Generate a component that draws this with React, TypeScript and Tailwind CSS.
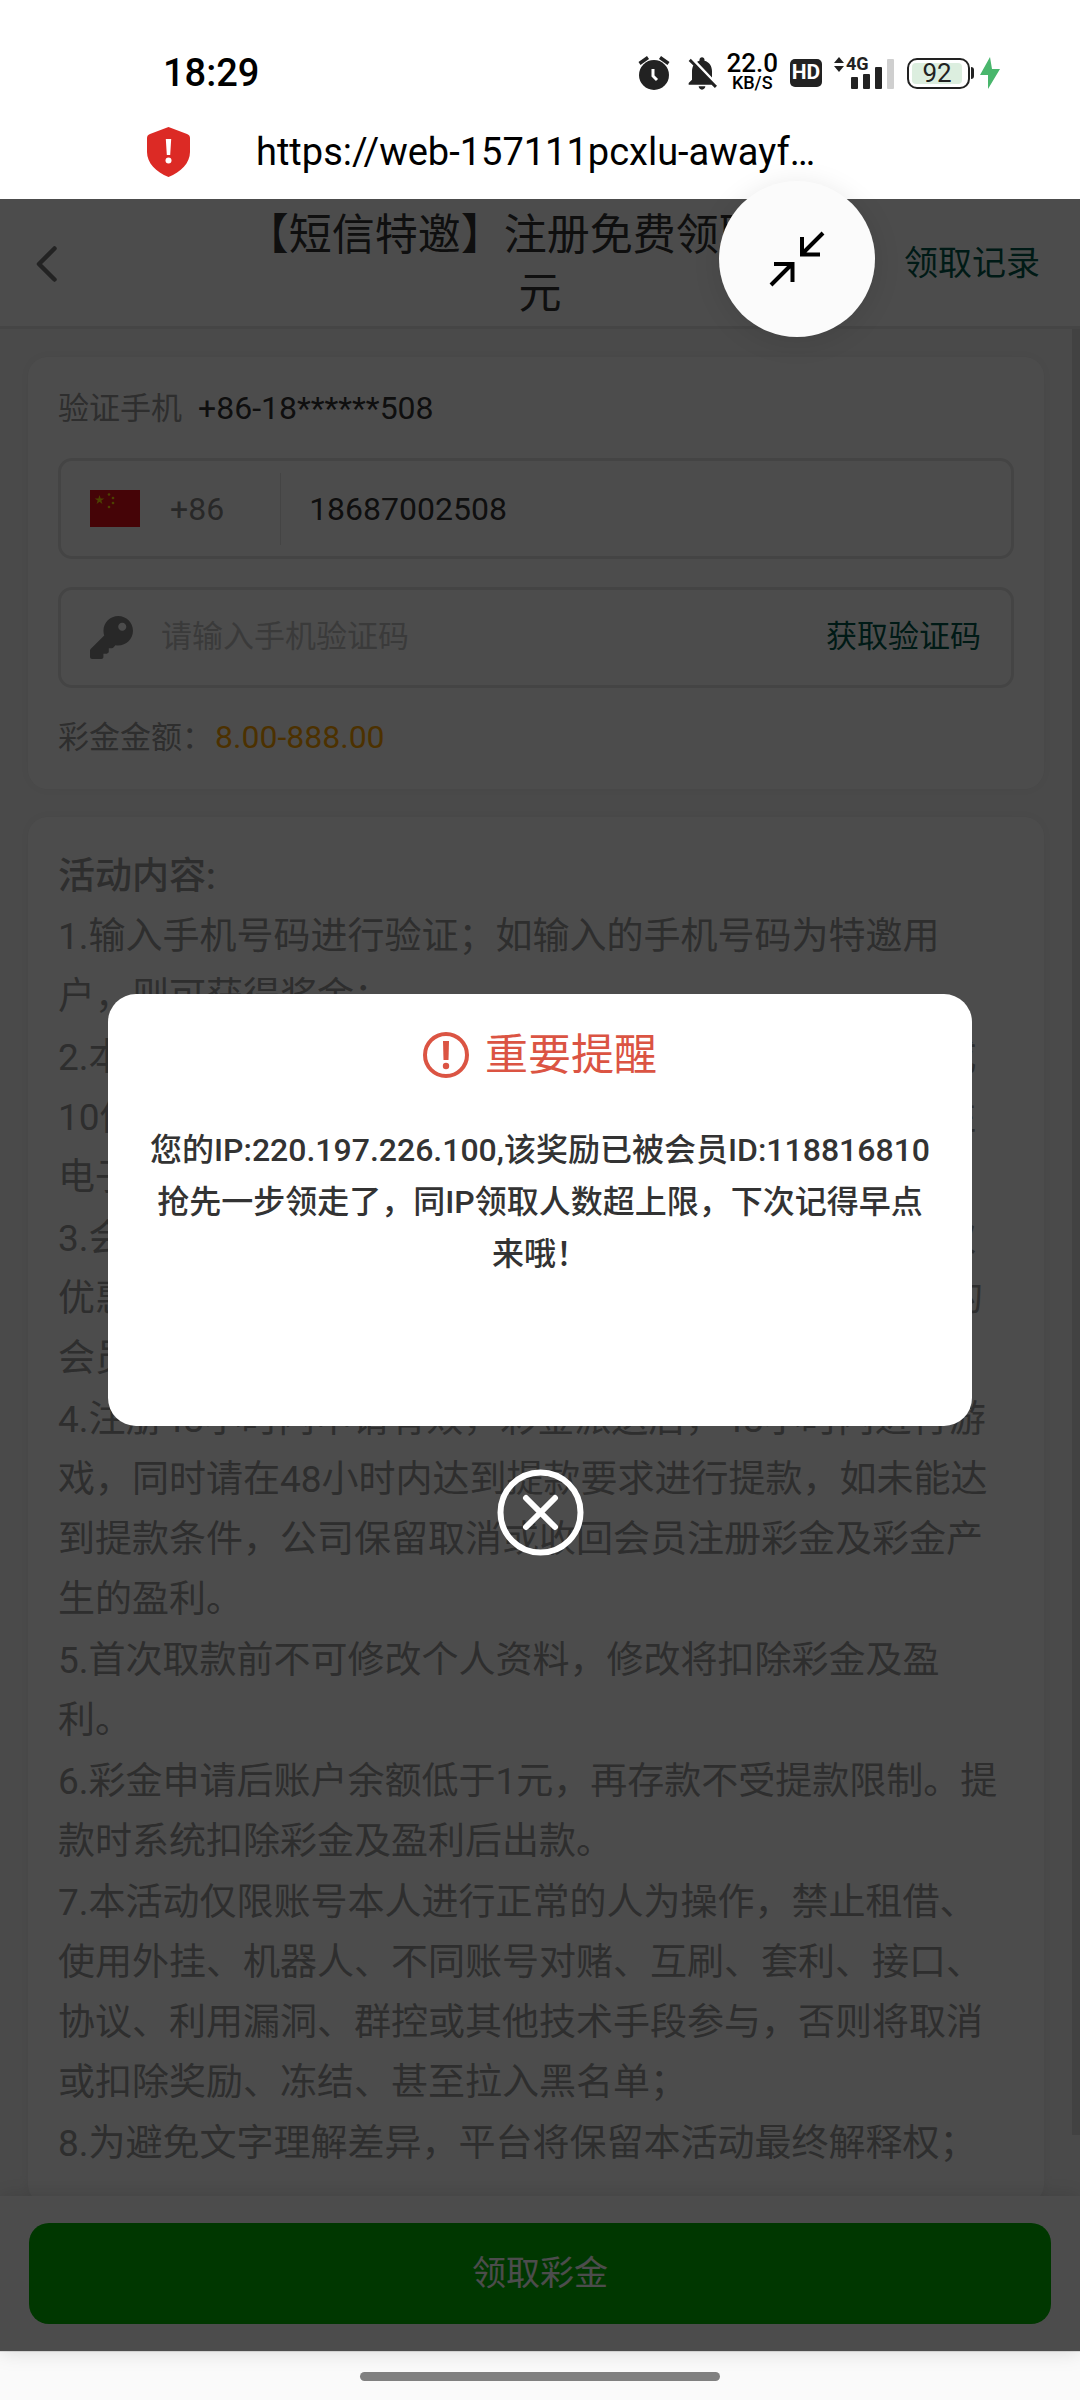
import { useState } from "react";
import { FaKey } from "react-icons/fa";
import { MdNotificationsOff } from "react-icons/md";

const rules = [
  "1.输入手机号码进行验证；如输入的手机号码为特邀用户，则可获得奖金；",
  "2.本活动赠送的彩金仅限老虎机及捕鱼游戏，申请需完成10倍流水方可提款，单次最高可提款100元，且仅限下注电子游戏；",
  "3.会员每个手机号码、姓名、银行卡、设备仅可参与一次优惠，如发现账号重复申请，平台将有权取消违规领取的会员彩金及盈利；",
  "4.注册48小时内申请有效，彩金派送后，48小时内进行游戏，同时请在48小时内达到提款要求进行提款，如未能达到提款条件，公司保留取消或收回会员注册彩金及彩金产生的盈利。",
  "5.首次取款前不可修改个人资料，修改将扣除彩金及盈利。",
  "6.彩金申请后账户余额低于1元，再存款不受提款限制。提款时系统扣除彩金及盈利后出款。",
  "7.本活动仅限账号本人进行正常的人为操作，禁止租借、使用外挂、机器人、不同账号对赌、互刷、套利、接口、协议、利用漏洞、群控或其他技术手段参与，否则将取消或扣除奖励、冻结、甚至拉入黑名单；",
  "8.为避免文字理解差异，平台将保留本活动最终解释权；",
];

const StatusBar = () => (
  <div className="flex h-16 items-center justify-between pl-[163px] pr-20 text-[#222]">
    <span className="text-[38px] font-medium text-black">18:29</span>
    <div className="flex items-center gap-3">
      <svg width="32" height="36" viewBox="0 0 32 36">
        <circle cx="16" cy="20" r="15" fill="#222" />
        <path d="M1.500 8.500l8.500-6M30.500 8.500l-8.500-6" stroke="#222" strokeWidth="3.500" />
        <path d="M15 14v7l4 4" fill="none" stroke="#fff" strokeWidth="3" />
      </svg>
      <MdNotificationsOff size={40} className="-mr-2" />
      <div className="flex flex-col items-center font-medium text-black">
        <span className="text-[26px] leading-5">22.0</span>
        <span className="text-lg leading-5">KB/S</span>
      </div>
      <span className="flex h-7 w-8 items-center justify-center rounded-[5px] bg-[#222] text-[21px] font-bold text-white">HD</span>
      {/* Signal */}
      <div className="relative">
        <svg width="60" height="34" viewBox="0 0 60 34">
          <path d="M5 1l5 6H0zM5 16l5-6H0z" fill="#222" />
          <rect x="17" y="21" width="7" height="12" rx="1" fill="#222" />
          <rect x="29" y="18" width="7" height="15" rx="1" fill="#222" />
          <rect x="41" y="11" width="7" height="22" rx="1" fill="#222" />
          <rect x="53" y="3" width="7" height="30" rx="1" fill="#cfcfcf" />
        </svg>
        <span className="absolute left-3 top-0 text-lg leading-4 font-bold">4G</span>
      </div>
      {/* Battery */}
      <div className="ml-px flex items-center">
        <div className="h-[31px] w-[63px] rounded-[10px] border-2 border-[#222] p-[3px]">
          <div className="flex h-full w-[50px] items-center justify-center rounded-[4px] bg-[#dceedf] text-[26px]">92</div>
        </div>
        <div className="ml-px h-3 w-[3px] rounded-r bg-[#222]" />
        <svg width="20" height="32" viewBox="0 0 20 32" className="ml-[6px]">
          <path d="M10 0L0 18h8v14L20 12h-8z" fill="#49b66c" />
        </svg>
      </div>
    </div>
  </div>
);

const Flag = () => (
  <svg width="50" height="37" viewBox="0 0 50 37" className="shrink-0">
    <rect width="50" height="37" fill="#e6101a" />
    <path d="M9.500 5l1.100 3.400h3.600l-2.900 2.100 1.100 3.400-2.900-2.100-2.900 2.100 1.100-3.400-2.900-2.100h3.600z" fill="#ffde00" />
    <circle cx="19" cy="4.500" r="1.300" fill="#ffde00" />
    <circle cx="23" cy="8" r="1.300" fill="#ffde00" />
    <circle cx="23" cy="13" r="1.300" fill="#ffde00" />
    <circle cx="19" cy="17" r="1.300" fill="#ffde00" />
  </svg>
);

const App = () => {
  const [phone, setPhone] = useState("18687002508");
  const [code, setCode] = useState("");
  const [isOpen, setIsOpen] = useState(true);

  return (
    <div className="flex h-screen flex-col overflow-hidden bg-white font-[Roboto,'Noto_Sans_CJK_SC',sans-serif]">
      <div className="shrink-0 pt-[41px]">
        <StatusBar />
        {/* Address bar */}
        <div className="flex h-[94px] items-center pl-[147px]">
          <svg width="43" height="50" viewBox="0 0 43 50">
            <path d="M21.500 0L40 7q3 1 3 4v14c0 11-9 20-21.500 25C9 45 0 36 0 25V11q0-3 3-4z" fill="#dc2a25" />
            <path d="M18.800 12h5.400l-1 16h-3.400z" fill="#fff" />
            <circle cx="21.500" cy="33.500" r="3" fill="#fff" />
          </svg>
          <span className="ml-[66px] text-[38px] text-black">https://web-157111pcxlu-awayf…</span>
        </div>
      </div>

      <div className="relative flex min-h-0 flex-1 flex-col bg-[#f8f8f8]">
        {/* Header */}
        <header className="flex h-[130px] shrink-0 items-center justify-between border-b-[3px] border-[#e8e8e8] bg-white pt-0.5 pl-9 pr-10">
          <button className="w-[140px]" aria-label="返回">
            <svg width="21" height="36" viewBox="0 0 21 36">
              <path d="M18.500 2.500L3 18l15.500 15.500" fill="none" stroke="#777" strokeWidth="4.500" strokeLinecap="round" strokeLinejoin="round" />
            </svg>
          </button>
          <h1 className="w-[620px] text-center text-[43px] leading-[58px] text-[#333]">【短信特邀】注册免费领取888元</h1>
          <a href="#records" className="text-[34px] text-[#00594a]">领取记录</a>
        </header>

        <div className="flex min-h-0 flex-1">
          <main className="min-w-0 flex-1 overflow-hidden p-7 text-[31px]">
            <section className="flex flex-col gap-7 rounded-[20px] bg-white p-[30px] shadow-[0_0_12px_rgba(0,0,0,0.06)]">
              <div className="flex gap-4 leading-[43px]">
                <span className="text-[#999]">验证手机</span>
                <span className="text-[32px] text-[#333]">+86-18******508</span>
              </div>
              <div className="flex h-[101px] items-center rounded-[14px] border-[3px] border-[#e4e4e4] pl-[29px] text-[32px]">
                <Flag />
                <button className="ml-[30px] text-[#888]">+86</button>
                <div className="ml-14 h-[72px] w-px bg-[#e4e4e4]" />
                <input
                  aria-label="手机号码"
                  type="tel"
                  value={phone}
                  onChange={(e) => setPhone(e.target.value)}
                  className="ml-[28px] min-w-0 flex-1 text-[#333] outline-none"
                />
              </div>
              <div className="flex h-[101px] items-center rounded-[14px] border-[3px] border-[#e4e4e4] pl-[29px] pr-[30px]">
                <FaKey size={43} className="shrink-0 text-[#888]" />
                <input
                  aria-label="手机验证码"
                  value={code}
                  onChange={(e) => setCode(e.target.value)}
                  placeholder="请输入手机验证码"
                  className="ml-[28px] min-w-0 flex-1 outline-none placeholder:text-[#c4c4c4]"
                />
                <button className="text-[#00594a]">获取验证码</button>
              </div>
              <div className="flex gap-0.5 leading-[43px]">
                <span className="text-[#999]">彩金金额：</span>
                <span className="text-[32px] text-[#ffa500]">8.00-888.00</span>
              </div>
            </section>

            <section className="mt-7 rounded-[20px] bg-white py-[30px] pl-[30px] pr-8 text-[37px] leading-[60px] text-[#999] shadow-[0_0_12px_rgba(0,0,0,0.06)]">
              <h2 className="font-medium">活动内容:</h2>
              <div className="flex flex-col gap-px">
                {rules.map((rule) => (
                  <p key={rule}>{rule}</p>
                ))}
              </div>
            </section>
          </main>
          <div className="w-2 pb-[61px]">
            <div className="h-full bg-[#dedede]" />
          </div>
        </div>

        {/* Submit */}
        <div className="relative shrink-0 bg-white px-[29px] py-[27px] shadow-[0_0_20px_rgba(0,0,0,0.15)]">
          <button className="h-[101px] w-full rounded-[20px] bg-[#00b700] text-[34px] text-white">领取彩金</button>
        </div>

        {/* Reminder dialog */}
        {isOpen && (
          <div className="absolute inset-0 flex flex-col items-center justify-center gap-[43px] bg-black/70">
            <div role="dialog" className="h-[432px] w-4/5 rounded-[28px] bg-white px-10 pt-[30px]">
              <div className="flex items-center justify-center gap-4 text-[43px] leading-[62px] text-[#db5443]">
                <svg width="46" height="46" viewBox="0 0 46 46">
                  <circle cx="23" cy="23" r="21" fill="none" stroke="#db5443" strokeWidth="4" />
                  <path d="M20 9h6l-.5 19h-5z" fill="#db5443" />
                  <circle cx="23" cy="34" r="3.200" fill="#db5443" />
                </svg>
                重要提醒
              </div>
              <p className="mt-[38px] text-center text-[32px] leading-[52px] font-medium text-[#333]">
                您的IP:220.197.226.100,该奖励已被会员ID:118816810抢先一步领走了，同IP领取人数超上限，下次记得早点来哦！
              </p>
            </div>
            <button onClick={() => setIsOpen(false)} aria-label="关闭">
              <svg width="87" height="87" viewBox="0 0 87 87">
                <circle cx="43.500" cy="43.500" r="40" fill="none" stroke="#fff" strokeWidth="6" />
                <path d="M29 29l29 29M58 29L29 58" stroke="#fff" strokeWidth="6" strokeLinecap="round" />
              </svg>
            </button>
          </div>
        )}

        {/* Floating shrink button */}
        <button
          aria-label="缩小"
          className="absolute -top-[18px] right-[205px] flex size-[156px] items-center justify-center rounded-full bg-[#fbfbfb] shadow-[0_4px_28px_rgba(0,0,0,0.1)]"
        >
          <svg width="56" height="56" viewBox="0 0 56 56" fill="none" stroke="#000" strokeWidth="4">
            <path d="M54 2L33 23M33 6v17.500h18M2 54l21-21M5 33h18.500v18" />
          </svg>
        </button>
      </div>

      {/* Gesture bar */}
      <div className="flex h-[49px] shrink-0 items-center justify-center border-t border-[#e0e0e0] bg-[#fafafa]">
        <div className="h-[9px] w-1/3 rounded-full bg-[#808080]" />
      </div>
    </div>
  );
};

export default App;
